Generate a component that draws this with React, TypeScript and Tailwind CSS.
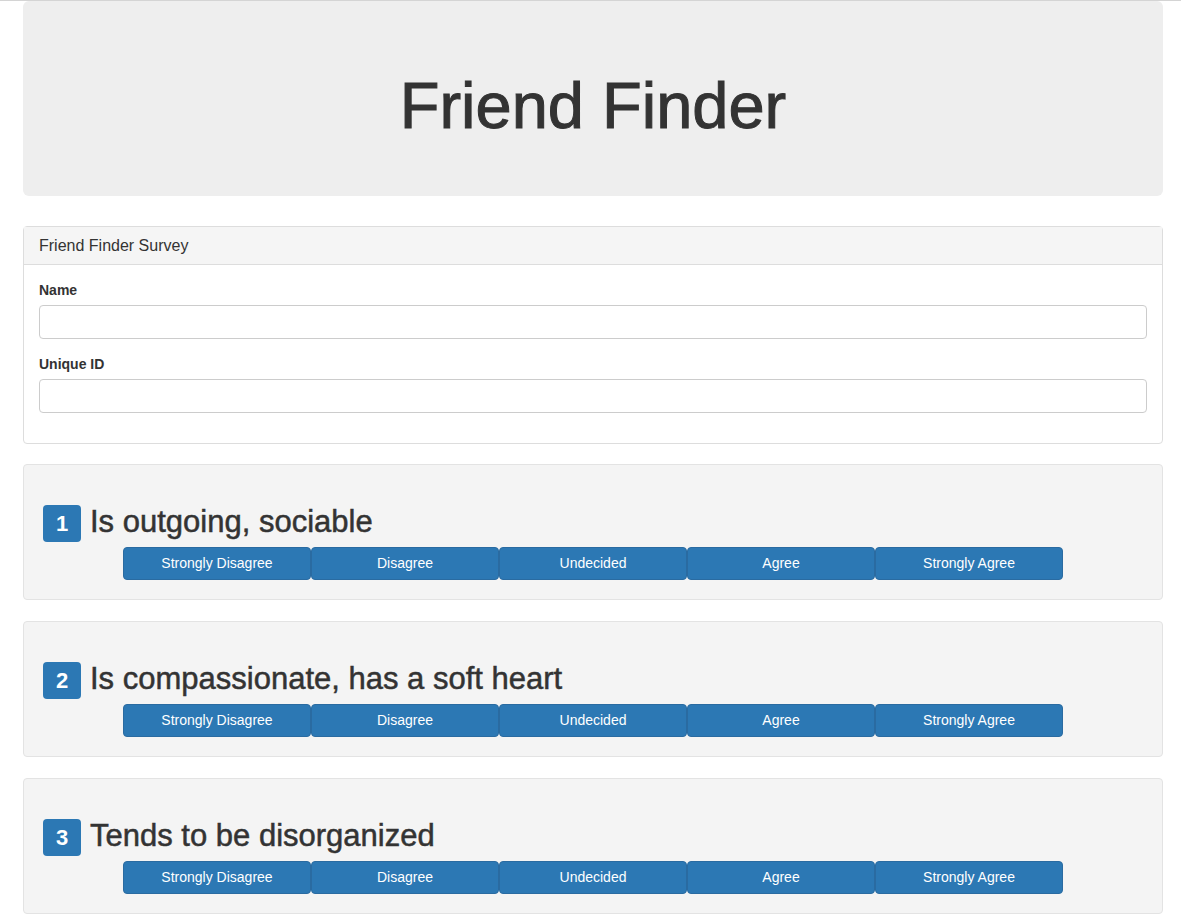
import React from "react"

const questions = [
  "Is outgoing, sociable",
  "Is compassionate, has a soft heart",
  "Tends to be disorganized",
]

const choices = ["Strongly Disagree", "Disagree", "Undecided", "Agree", "Strongly Agree"]

function Question({ num, text }: { num: number; text: string }) {
  return (
    <div className="mb-[21px] rounded-[4px] border border-[#e3e3e3] bg-[#f4f4f4] px-[19px] pt-[40px] pb-[19px]">
      <div className="flex items-start">
        <span className="flex h-[37px] w-[38px] items-center justify-center rounded-[4px] bg-[#2c78b4] text-[22px] font-bold text-white">
          {num}
        </span>
        <h2 className="ml-[9px] text-[31px] leading-[33px] text-[#333] [-webkit-text-stroke:0.5px_#333]">{text}</h2>
      </div>
      <div className="mt-[5px] flex justify-center">
        {choices.map((c) => (
          <button
            key={c}
            className="h-[33px] w-[188px] rounded-[4px] border border-[#2a6ba1] bg-[#2c78b4] text-[14px] text-white"
          >
            {c}
          </button>
        ))}
      </div>
    </div>
  )
}

export default function App() {
  return (
    <div className="min-h-screen bg-white font-['Liberation_Sans',Arial,sans-serif] text-[#333]">
      <div className="h-px w-full bg-[#d4d4d4]" />
      <div className="ml-[23px] w-[1140px]">
        <div className="mb-[30px] flex h-[195px] items-center justify-center rounded-[6px] bg-[#eee] pt-[14px]">
          <h1 className="text-[65px] leading-[72px] text-[#333] [-webkit-text-stroke:1px_#333]">Friend Finder</h1>
        </div>

        <div className="mb-[20px] rounded-[4px] border border-[#ddd]">
          <div className="border-b border-[#ddd] bg-[#f5f5f5] px-[15px] py-[10px] text-[16px] leading-[17px]">
            Friend Finder Survey
          </div>
          <div className="p-[15px]">
            <div className="mb-[15px]">
              <label className="mb-[5px] block text-[14px] font-bold leading-[20px]">Name</label>
              <input className="block h-[34px] w-full rounded-[4px] border border-[#ccc] bg-white" />
            </div>
            <div className="mb-[15px]">
              <label className="mb-[5px] block text-[14px] font-bold leading-[20px]">Unique ID</label>
              <input className="block h-[34px] w-full rounded-[4px] border border-[#ccc] bg-white" />
            </div>
          </div>
        </div>

        {questions.map((q, i) => (
          <Question key={i} num={i + 1} text={q} />
        ))}
      </div>
    </div>
  )
}
